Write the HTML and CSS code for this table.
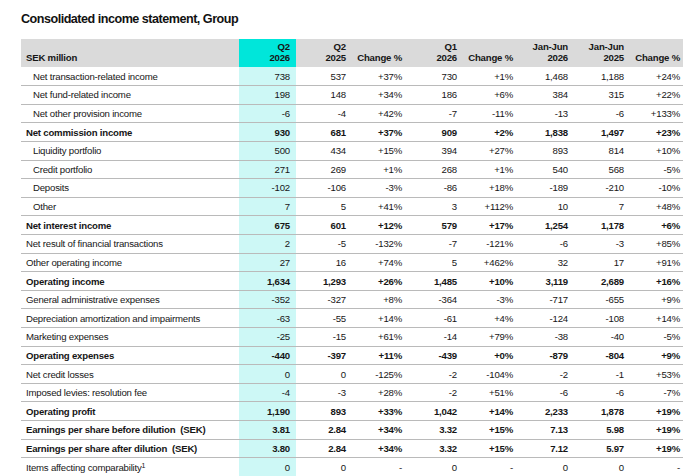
FILE: index.html
```html
<!DOCTYPE html>
<html lang="en">
<head>
<meta charset="utf-8">
<title>Consolidated income statement, Group</title>
<link rel="stylesheet" href="styles.css">
</head>
<body>
<main class="page">
  <h1 class="title">Consolidated income statement, Group</h1>
  <table class="stmt">
    <colgroup>
      <col class="c-label"><col class="c-q2a"><col class="c-q2b"><col class="c-ch1"><col class="c-q1"><col class="c-ch2"><col class="c-jj1"><col class="c-jj2"><col class="c-ch3">
    </colgroup>
    <thead>
      <tr>
        <th class="lbl">SEK million</th>
        <th class="hl-head">Q2<br>2026</th>
        <th>Q2<br>2025</th>
        <th>Change %</th>
        <th>Q1<br>2026</th>
        <th>Change %</th>
        <th>Jan-Jun<br>2026</th>
        <th>Jan-Jun<br>2025</th>
        <th class="last">Change %</th>
      </tr>
    </thead>
    <tbody>
      <tr><td class="lbl ind">Net transaction-related income</td><td class="hl">738</td><td>537</td><td>+37%</td><td>730</td><td>+1%</td><td>1,468</td><td>1,188</td><td class="last">+24%</td></tr>
      <tr><td class="lbl ind">Net fund-related income</td><td class="hl">198</td><td>148</td><td>+34%</td><td>186</td><td>+6%</td><td>384</td><td>315</td><td class="last">+22%</td></tr>
      <tr><td class="lbl ind">Net other provision income</td><td class="hl">-6</td><td>-4</td><td>+42%</td><td>-7</td><td>-11%</td><td>-13</td><td>-6</td><td class="last">+133%</td></tr>
      <tr class="bold"><td class="lbl">Net commission income</td><td class="hl">930</td><td>681</td><td>+37%</td><td>909</td><td>+2%</td><td>1,838</td><td>1,497</td><td class="last">+23%</td></tr>
      <tr><td class="lbl ind">Liquidity portfolio</td><td class="hl">500</td><td>434</td><td>+15%</td><td>394</td><td>+27%</td><td>893</td><td>814</td><td class="last">+10%</td></tr>
      <tr><td class="lbl ind">Credit portfolio</td><td class="hl">271</td><td>269</td><td>+1%</td><td>268</td><td>+1%</td><td>540</td><td>568</td><td class="last">-5%</td></tr>
      <tr><td class="lbl ind">Deposits</td><td class="hl">-102</td><td>-106</td><td>-3%</td><td>-86</td><td>+18%</td><td>-189</td><td>-210</td><td class="last">-10%</td></tr>
      <tr><td class="lbl ind">Other</td><td class="hl">7</td><td>5</td><td>+41%</td><td>3</td><td>+112%</td><td>10</td><td>7</td><td class="last">+48%</td></tr>
      <tr class="bold"><td class="lbl">Net interest income</td><td class="hl">675</td><td>601</td><td>+12%</td><td>579</td><td>+17%</td><td>1,254</td><td>1,178</td><td class="last">+6%</td></tr>
      <tr><td class="lbl">Net result of financial transactions</td><td class="hl">2</td><td>-5</td><td>-132%</td><td>-7</td><td>-121%</td><td>-6</td><td>-3</td><td class="last">+85%</td></tr>
      <tr><td class="lbl">Other operating income</td><td class="hl">27</td><td>16</td><td>+74%</td><td>5</td><td>+462%</td><td>32</td><td>17</td><td class="last">+91%</td></tr>
      <tr class="bold"><td class="lbl">Operating income</td><td class="hl">1,634</td><td>1,293</td><td>+26%</td><td>1,485</td><td>+10%</td><td>3,119</td><td>2,689</td><td class="last">+16%</td></tr>
      <tr><td class="lbl">General administrative expenses</td><td class="hl">-352</td><td>-327</td><td>+8%</td><td>-364</td><td>-3%</td><td>-717</td><td>-655</td><td class="last">+9%</td></tr>
      <tr><td class="lbl">Depreciation amortization and impairments</td><td class="hl">-63</td><td>-55</td><td>+14%</td><td>-61</td><td>+4%</td><td>-124</td><td>-108</td><td class="last">+14%</td></tr>
      <tr><td class="lbl">Marketing expenses</td><td class="hl">-25</td><td>-15</td><td>+61%</td><td>-14</td><td>+79%</td><td>-38</td><td>-40</td><td class="last">-5%</td></tr>
      <tr class="bold"><td class="lbl">Operating expenses</td><td class="hl">-440</td><td>-397</td><td>+11%</td><td>-439</td><td>+0%</td><td>-879</td><td>-804</td><td class="last">+9%</td></tr>
      <tr><td class="lbl">Net credit losses</td><td class="hl">0</td><td>0</td><td>-125%</td><td>-2</td><td>-104%</td><td>-2</td><td>-1</td><td class="last">+53%</td></tr>
      <tr><td class="lbl">Imposed levies: resolution fee</td><td class="hl">-4</td><td>-3</td><td>+28%</td><td>-2</td><td>+51%</td><td>-6</td><td>-6</td><td class="last">-7%</td></tr>
      <tr class="bold"><td class="lbl">Operating profit</td><td class="hl">1,190</td><td>893</td><td>+33%</td><td>1,042</td><td>+14%</td><td>2,233</td><td>1,878</td><td class="last">+19%</td></tr>
      <tr class="bold"><td class="lbl">Earnings per share before dilution&nbsp; (SEK)</td><td class="hl">3.81</td><td>2.84</td><td>+34%</td><td>3.32</td><td>+15%</td><td>7.13</td><td>5.98</td><td class="last">+19%</td></tr>
      <tr class="bold"><td class="lbl">Earnings per share after dilution&nbsp; (SEK)</td><td class="hl">3.80</td><td>2.84</td><td>+34%</td><td>3.32</td><td>+15%</td><td>7.12</td><td>5.97</td><td class="last">+19%</td></tr>
      <tr><td class="lbl">Items affecting comparability<sup class="fn">1</sup></td><td class="hl">0</td><td>0</td><td>-</td><td>0</td><td>-</td><td>0</td><td>0</td><td class="last">-</td></tr>
    </tbody>
  </table>
</main>
</body>
</html>
```

FILE: styles.css
```css
* { box-sizing: border-box; }

html, body {
  margin: 0;
  padding: 0;
  background: #ffffff;
}

body {
  font-family: "Liberation Sans", Arial, sans-serif;
  color: #161616;
  overflow: hidden;
}

.page {
  padding: 12px 0 0 21px;
}

.title {
  margin: 0 0 13px 0;
  font-size: 12.6px;
  line-height: 14px;
  font-weight: 700;
  letter-spacing: -0.5px;
  color: #111;
}

.stmt {
  width: 662px;
  border-collapse: collapse;
  table-layout: fixed;
  font-size: 9.6px;
  letter-spacing: -0.2px;
}

.c-label { width: 218px; }
.c-q2a { width: 57px; }
.c-q2b { width: 56px; }
.c-ch1 { width: 56px; }
.c-q1 { width: 55px; }
.c-ch2 { width: 56px; }
.c-jj1 { width: 55px; }
.c-jj2 { width: 56px; }
.c-ch3 { width: 53px; }

.stmt thead th {
  background: #dadada;
  height: 28px;
  padding: 0 6px 4px 0;
  text-align: right;
  vertical-align: bottom;
  font-weight: 700;
  line-height: 11px;
}

.stmt thead th.lbl {
  text-align: left;
  padding-left: 5px;
}

.stmt thead th.hl-head {
  background: #00e6da;
}

.stmt thead th.last,
.stmt td.last {
  padding-right: 3px;
}

.stmt tbody td {
  height: 18.62px;
  padding: 0 6px 0 0;
  text-align: right;
  vertical-align: middle;
  line-height: 11px;
  border-bottom: 1px solid #bababa;
  white-space: nowrap;
}

.stmt tbody td.lbl {
  text-align: left;
  padding-left: 5px;
}

.stmt tbody td.ind {
  padding-left: 12px;
}

.stmt tbody td.hl {
  background: #cdf8f6;
}

.stmt tbody tr.bold td {
  font-weight: 700;
}

.fn {
  font-size: 7px;
  line-height: 0;
  vertical-align: 3px;
}
```
